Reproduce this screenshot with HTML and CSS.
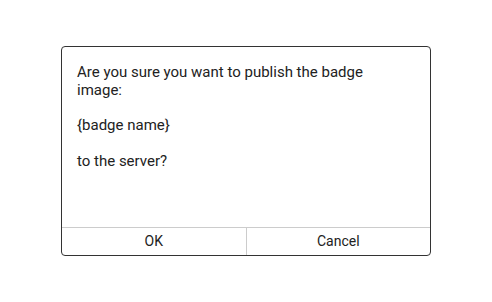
FILE: index.html
```html
<!DOCTYPE html>
<html>
<head>
<meta charset="utf-8">
<link rel="stylesheet" href="styles.css">
</head>
<body>
<div class="dialog">
  <div class="message">
    <p class="line">Are you sure you want to publish the badge image:</p>
    <p class="line">{badge name}</p>
    <p class="line">to the server?</p>
  </div>
  <div class="actions">
    <button class="btn">OK</button>
    <button class="btn btn-cancel">Cancel</button>
  </div>
</div>
</body>
</html>
```
FILE: styles.css
```css
html, body {
  margin: 0;
  padding: 0;
  background: #ffffff;
}
body {
  font-family: Roboto, "Liberation Sans", sans-serif;
  font-size: 14px;
  color: #222222;
}
.dialog {
  box-sizing: border-box;
  width: 370px;
  height: 210px;
  margin: 46px 0 0 61px;
  border: 1px solid #333333;
  border-radius: 4px;
  display: flex;
  flex-direction: column;
  overflow: hidden;
}
.message {
  flex: 1;
  padding: 17px 40px 0 15px;
  font-size: 15px;
  line-height: 17.75px;
}
.line {
  margin: 0 0 17.75px 0;
}
.actions {
  display: flex;
  height: 28px;
  box-sizing: border-box;
  border-top: 1px solid #cccccc;
}
.btn {
  flex: 1;
  margin: 0;
  padding: 0;
  border: 0;
  background: transparent;
  font-family: Roboto, "Liberation Sans", sans-serif;
  font-size: 14px;
  color: #222222;
  line-height: 27px;
}
.btn-cancel {
  border-left: 1px solid #cccccc;
}
```
